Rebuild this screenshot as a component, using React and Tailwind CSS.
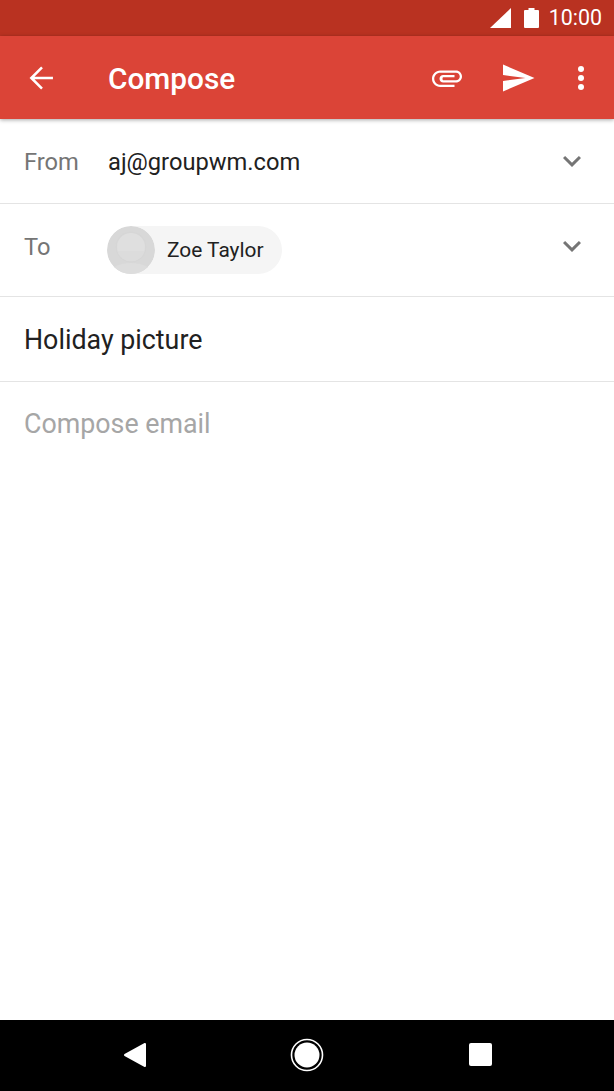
const Chevron = () => (
  <svg width="36" height="36" viewBox="0 0 24 24" className="fill-[#757575]">
    <path d="M16.59 8.59L12 13.17 7.41 8.59 6 10l6 6 6-6z" />
  </svg>
);

const App = () => {
  return (
    <div
      className="h-[1091px] w-[614px] flex flex-col bg-white overflow-hidden"
      style={{ fontFamily: "Roboto, sans-serif" }}
    >
      {/* Status bar */}
      <div className="h-9 shrink-0 bg-[#b93221] flex items-center justify-end pr-3 text-white">
        <svg width="22" height="20" viewBox="0 0 22 20" className="fill-white mr-[12px]">
          <path d="M0 20L21 0v20z" />
        </svg>
        <svg width="15" height="20" viewBox="0 0 15 20" className="fill-white mr-[10px]">
          <path d="M4.500 0h6v2h3.500a1 1 0 0 1 1 1v16a1 1 0 0 1-1 1H1a1 1 0 0 1-1-1V3a1 1 0 0 1 1-1h3.500z" />
        </svg>
        <span className="text-[21.400px] leading-none">10:00</span>
      </div>

      {/* Toolbar */}
      <div className="h-[83px] shrink-0 bg-[#db4437] flex items-center text-white shadow-[0_1px_4px_rgba(0,0,0,0.35)] relative z-10">
        <svg width="36" height="36" viewBox="0 0 24 24" className="fill-none stroke-white stroke-[1.700] ml-[24px] mr-[48px] shrink-0">
          <path d="M19.300 12H5 M12 4.900L4.900 12l7.100 7.100" />
        </svg>
        <span className="text-[29.800px] font-medium leading-none mt-[3px]">Compose</span>
        <svg width="36" height="36" viewBox="0 0 24 24" className="fill-white ml-auto">
          <path d="M2 12.5C2 9.46 4.46 7 7.5 7H18c2.21 0 4 1.79 4 4s-1.79 4-4 4H9.5C8.12 15 7 13.88 7 12.5S8.12 10 9.5 10H17v1.5H9.41c-.55 0-.55 2 0 2H18c1.38 0 2.5-1.12 2.5-2.5S19.38 8.5 18 8.5H7.5C5.29 8.500 3.500 10.290 3.500 12.500S5.290 16.500 7.500 16.500H17V18H7.500C4.460 18 2 15.540 2 12.500z" />
        </svg>
        <svg width="36" height="36" viewBox="0 0 24 24" className="fill-white ml-[35px]">
          <path d="M2.010 21L23 12 2.010 3 2 10l15 2-15 2z" />
        </svg>
        <svg width="36" height="36" viewBox="0 0 24 24" className="fill-white ml-[27px] mr-[15px]">
          <circle cx="12" cy="6" r="2" />
          <circle cx="12" cy="12" r="2" />
          <circle cx="12" cy="18" r="2" />
        </svg>
      </div>

      {/* From */}
      <div className="h-[85px] shrink-0 flex items-center border-b border-[#e4e4e4] pl-6 pr-6">
        <span className="w-[84px] text-[23.700px] leading-none text-[#757575] mt-[3px]">From</span>
        <span className="text-[23.700px] leading-none text-[#212121] mt-[3px]">aj@groupwm.com</span>
        <div className="ml-auto">
          <Chevron />
        </div>
      </div>

      {/* To */}
      <div className="h-[93px] shrink-0 flex items-center border-b border-[#e4e4e4] pl-6 pr-6">
        <span className="w-[83px] text-[23.700px] leading-none text-[#757575] -mt-[5px]">To</span>
        <div className="h-12 w-[175px] flex items-center rounded-full bg-[#f5f5f5]">
          <svg width="48" height="48" viewBox="0 0 48 48" className="mr-3">
            <defs>
              <clipPath id="avatar">
                <circle cx="24" cy="24" r="24" />
              </clipPath>
            </defs>
            <g clipPath="url(#avatar)">
              <circle cx="24" cy="24" r="24" fill="#d8d8d8" />
              <ellipse cx="24" cy="50" rx="23" ry="13" fill="#dddddd" />
              <circle cx="24" cy="21" r="15.500" fill="#d6d6d6" />
              <circle cx="24" cy="21" r="14" fill="#dfdfdf" />
              <path d="M10.500 25h27a14 14 0 0 1-27 0z" fill="#dcdcdc" />
            </g>
          </svg>
          <span className="text-[20.900px] leading-none text-[#212121]">Zoe Taylor</span>
        </div>
        <div className="ml-auto -mt-[8px]">
          <Chevron />
        </div>
      </div>

      {/* Subject */}
      <div className="h-[85px] shrink-0 flex items-center border-b border-[#e4e4e4] pl-6">
        <span className="text-[26.800px] leading-none text-[#212121] mt-[2px]">Holiday picture</span>
      </div>

      {/* Body */}
      <div className="flex-1 pl-6 pt-[29px]">
        <span className="block text-[26.800px] leading-none text-[#a6a6a6]">Compose email</span>
      </div>

      {/* Nav bar */}
      <div className="h-[71px] shrink-0 bg-black flex items-center justify-center pb-[2px]">
        <svg width="24" height="26" viewBox="0 0 24 26" className="fill-white stroke-white stroke-2 mr-[143px]" strokeLinejoin="round">
          <path d="M22 2v22L2 13z" />
        </svg>
        <svg width="34" height="34" viewBox="0 0 34 34" className="mr-[145px]">
          <circle cx="17" cy="17" r="15.500" fill="none" stroke="white" strokeWidth="1.600" />
          <circle cx="17" cy="17" r="12.500" fill="white" />
        </svg>
        <div className="w-[23px] h-[23px] rounded-[2px] bg-white" />
      </div>
    </div>
  );
};

export default App;
